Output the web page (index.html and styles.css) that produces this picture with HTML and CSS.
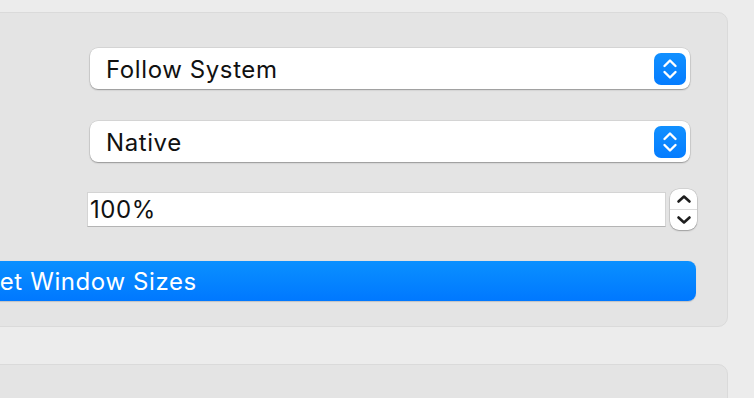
FILE: index.html
```html
<!DOCTYPE html>
<html lang="en">
<head>
<meta charset="utf-8">
<title>Settings</title>
<link rel="stylesheet" href="styles.css">
</head>
<body>
<div class="page">
  <section class="panel">
    <div class="row">
      <div class="label"></div>
      <div class="control">
        <div class="popup">
          <span class="popup-text">Follow System</span>
          <span class="popup-arrows">
            <svg width="16" height="24" viewBox="0 0 16 24"><path d="M2.5 9 L8 3.5 L13.5 9 M2.5 15 L8 20.5 L13.5 15" fill="none" stroke="#fff" stroke-width="2.4" stroke-linecap="round" stroke-linejoin="round"/></svg>
          </span>
        </div>
      </div>
    </div>
    <div class="row row-gap">
      <div class="label"></div>
      <div class="control">
        <div class="popup">
          <span class="popup-text">Native</span>
          <span class="popup-arrows">
            <svg width="16" height="24" viewBox="0 0 16 24"><path d="M2.5 9 L8 3.5 L13.5 9 M2.5 15 L8 20.5 L13.5 15" fill="none" stroke="#fff" stroke-width="2.4" stroke-linecap="round" stroke-linejoin="round"/></svg>
          </span>
        </div>
      </div>
    </div>
    <div class="row row-gap-2">
      <div class="label"></div>
      <div class="control field-row">
        <div class="field">100%</div>
        <div class="stepper">
          <span class="step step-up"><svg width="16" height="12" viewBox="0 0 16 12"><path d="M2.5 8.5 L8 3.5 L13.5 8.5" fill="none" stroke="#1e1e1e" stroke-width="2.6" stroke-linecap="round" stroke-linejoin="round"/></svg></span>
          <span class="step step-down"><svg width="16" height="12" viewBox="0 0 16 12"><path d="M2.5 3.5 L8 8.5 L13.5 3.5" fill="none" stroke="#1e1e1e" stroke-width="2.6" stroke-linecap="round" stroke-linejoin="round"/></svg></span>
        </div>
      </div>
    </div>
    <div class="button-row">
      <button class="primary">Reset Window Sizes</button>
    </div>
  </section>
  <section class="panel panel-next"></section>
</div>
</body>
</html>
```
FILE: styles.css
```css
html, body {
  margin: 0;
  padding: 0;
}
body {
  background: #ececec;
  font-family: Inter, "Noto Sans", sans-serif;
  color: #111;
  overflow: hidden;
  width: 754px;
  height: 398px;
}
.page {
  padding-top: 12px;
  margin-left: -550px;
  width: 1278px;
  height: 386px;
  overflow: hidden;
}
.panel {
  box-sizing: border-box;
  width: 1278px;
  height: 315px;
  background: #e4e4e4;
  border: 1px solid #dadada;
  border-radius: 10px;
  padding: 35px 31px 0 20px;
}
.panel-next {
  margin-top: 37px;
  height: 60px;
}
.row {
  display: grid;
  grid-template-columns: 616px 1fr;
  align-items: center;
}
.row-gap { margin-top: 32px; }
.row-gap-2 { margin-top: 27px; }
.popup {
  margin: 0 6px 0 3px;
  height: 41px;
  background: #fff;
  border-radius: 8px;
  box-shadow: 0 0 0 0.5px rgba(0,0,0,0.12), 0 1px 1.5px rgba(0,0,0,0.3);
  display: flex;
  align-items: center;
  justify-content: space-between;
  padding: 0 4px 0 16px;
  box-sizing: border-box;
}
.popup-text {
  font-size: 24px;
  letter-spacing: 0.6px;
  line-height: 1;
  padding-top: 2px;
  color: #111;
}
.popup-arrows {
  width: 32px;
  height: 32px;
  border-radius: 7px;
  background: linear-gradient(#1190ff, #047cff);
  display: flex;
  align-items: center;
  justify-content: center;
}
.popup-arrows svg { display: block; }
.field-row {
  display: flex;
  align-items: center;
  gap: 4px;
  margin-right: -1px;
}
.field {
  flex: 1;
  height: 35px;
  box-sizing: border-box;
  background: #fff;
  border: 1px solid #d4d4d4;
  border-bottom: 1.5px solid #b4b4b4;
  font-size: 24px;
  letter-spacing: 0.6px;
  line-height: 34px;
  padding-left: 2px;
  color: #111;
}
.stepper {
  width: 27px;
  height: 41px;
  box-sizing: border-box;
  background: #fff;
  border-radius: 9px;
  box-shadow: 0 0 0 0.5px rgba(0,0,0,0.15), 0 1px 1.5px rgba(0,0,0,0.25);
  display: flex;
  flex-direction: column;
}
.step {
  flex: 1;
  display: flex;
  align-items: center;
  justify-content: center;
}
.step-up { border-bottom: 1px solid #dcdcdc; }
.step svg { display: block; }
.button-row {
  margin-top: 31px;
}
.primary {
  display: block;
  width: 100%;
  height: 40px;
  border: none;
  border-radius: 8px;
  background: linear-gradient(#0a90ff, #0078ff);
  color: #fff;
  font-family: Inter, "Noto Sans", sans-serif;
  font-size: 24px;
  letter-spacing: 0.6px;
  box-shadow: 0 0.5px 1px rgba(0,0,0,0.15);
  padding: 0 14px 0 0;
}
```
